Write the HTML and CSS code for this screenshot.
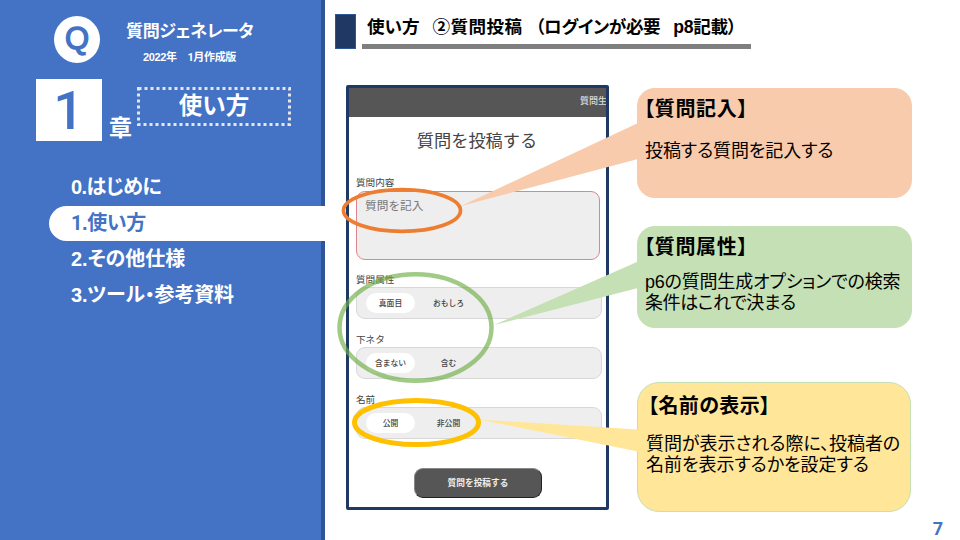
FILE: index.html
```html
<!DOCTYPE html>
<html lang="ja">
<head>
<meta charset="utf-8">
<title>質問ジェネレータ</title>
<link rel="stylesheet" href="styles.css">
</head>
<body>
<div class="slide">
  <aside class="sidebar">
    <div class="brand">
      <div class="logo">Q</div>
      <div class="brand-text">
        <div class="brand-name">質問ジェネレータ</div>
        <div class="brand-date">2022年　<span class="one">1</span>月作成版</div>
      </div>
    </div>
    <div class="chapter">
      <div class="chapter-num one">1</div>
      <div class="chapter-unit">章</div>
      <div class="chapter-title">
        <svg class="dots" width="154" height="39"><rect x="1.5" y="1.5" width="151" height="36"/></svg>
        <span>使い方</span>
      </div>
    </div>
    <nav class="menu">
      <div class="item i0">0.はじめに</div>
      <div class="item active"><span class="one">1</span>.使い方</div>
      <div class="item">2.その他仕様</div>
      <div class="item i3">3.ツール・参考資料</div>
    </nav>
  </aside>
  <main class="main">
    <header class="head">
      <div class="head-mark"></div>
      <h1 class="head-title"><span>使い方</span><span class="topic">②質問投稿</span><span class="cond">（ログインが必要</span><span class="ref">p8記載）</span></h1>
    </header>
    <div class="content">
      <section class="phone">
        <div class="bar">質問生</div>
        <h2 class="form-title">質問を投稿する</h2>
        <div class="label">質問内容</div>
        <div class="textarea">質問を記入</div>
        <div class="label l2">質問属性</div>
        <div class="group"><span class="opt on">真面目</span><span class="opt">おもしろ</span></div>
        <div class="label l3">下ネタ</div>
        <div class="group"><span class="opt on">含まない</span><span class="opt">含む</span></div>
        <div class="label l3">名前</div>
        <div class="group"><span class="opt on">公開</span><span class="opt">非公開</span></div>
        <div class="submit">質問を投稿する</div>
      </section>
      <section class="notes">
        <div class="note n1"><h3>【質問記入】</h3><p>投稿する質問を記入する</p></div>
        <div class="note n2"><h3>【質問属性】</h3><p><span class="row1">p6の質問生成オプションでの検索</span><br><span class="row2">条件はこれで決まる</span></p></div>
        <div class="note n3"><h3>【名前の表示】</h3><p><span class="row1">質問が表示される際に、投稿者の</span><br><span class="row2">名前を表示するかを設定する</span></p></div>
      </section>
    </div>
    <footer class="page">7</footer>
  </main>
  <svg class="overlay" width="960" height="540" viewBox="0 0 960 540">
    <polygon points="461,206 638,123 638,159" fill="#f8cbad"/>
    <polygon points="494,325 638,261.5 638,288" fill="#c5e0b4"/>
    <polygon points="479,419.5 638,429.5 638,451.5" fill="#ffe699"/>
    <ellipse cx="402" cy="210.5" rx="58.5" ry="20.8" stroke="#ed7d31" stroke-width="3.7"/>
    <ellipse cx="415.5" cy="327.5" rx="76" ry="53.2" stroke="#70ad47" stroke-opacity=".65" stroke-width="4.5"/>
    <ellipse cx="416.5" cy="422.5" rx="62" ry="22" stroke="#ffc000" stroke-width="5"/>
  </svg>
</div>
</body>
</html>
```
FILE: styles.css
```css
* { box-sizing: border-box; margin: 0; padding: 0; }
body { background: #fff; font-family: "Liberation Sans", "Noto Sans CJK JP", sans-serif; }
.slide { position: relative; width: 960px; height: 540px; display: grid; grid-template-columns: 325px 1fr; overflow: hidden; white-space: nowrap; }
.one { font-family: Roboto, sans-serif; }

.sidebar { background: #4472c4; border-right: 4px solid #2f5597; color: #fff; padding-top: 16px; font-weight: 700; }
.brand { display: flex; gap: 25px; padding-left: 54px; height: 63px; }
.logo { width: 46px; height: 47px; border-radius: 50%; background: #fff; color: #4472c4; font-size: 31px; line-height: 45px; text-align: center; font-weight: 400; -webkit-text-stroke: 1.4px #4472c4; }
.brand-name { font-size: 17px; line-height: 24px; margin-top: 4px; font-feature-settings: "palt"; letter-spacing: -0.35px; padding-left: 1px; }
.brand-date { font-size: 11px; line-height: 16px; margin-top: 5px; padding-left: 18px; letter-spacing: -0.35px; }
.chapter { display: flex; height: 62px; padding-left: 36px; }
.chapter-num { width: 66px; height: 62px; background: #fff; color: #4472c4; font-size: 54px; line-height: 64px; text-align: center; font-weight: 500; padding-right: 1px; }
.chapter-unit { width: 24px; margin: 35px 4px 0 7px; font-size: 23px; line-height: 28px; }
.chapter-title { position: relative; width: 154px; height: 39px; margin-top: 8px; font-size: 23.5px; line-height: 39px; text-align: center; }
.dots { position: absolute; left: 0; top: 0; }
.dots rect { fill: none; stroke: #e7e6e6; stroke-width: 3; stroke-dasharray: 3 3; }
.menu { margin-top: 27px; }
.item { height: 36px; line-height: 38px; padding-left: 71px; font-size: 20px; font-feature-settings: "palt"; }
.item.i0 { letter-spacing: -0.6px; }
.item.i3 { letter-spacing: -0.2px; }
.item.active { letter-spacing: -0.4px; height: 35px; line-height: 35px; margin: 2px -4px -1px 49px; padding-left: 22px; background: #fff; color: #4472c4; border-radius: 18px 0 0 18px; }

.main { display: flex; flex-direction: column; }
.head { display: flex; gap: 6px; padding: 14px 0 0 10px; height: 49px; }
.head-mark { width: 21px; height: 35px; background: #1f3864; border: 1px solid #2f5597; }
.head-title { width: 389px; height: 35px; border-bottom: 5px solid #7f7f7f; padding-left: 5px; font-size: 17.6px; line-height: 27px; display: flex; gap: 13px; font-feature-settings: "palt"; }
.head-title .topic { letter-spacing: 0.4px; }
.head-title .cond { letter-spacing: -0.4px; }
.head-title .ref { letter-spacing: -0.3px; }
.content { display: flex; gap: 28px; padding: 36px 0 0 21px; }
.phone { width: 263px; height: 425px; border: 3px solid #1f3864; border-radius: 2px; padding: 0 4px 0 7px; color: #444; overflow: hidden; font-family: "Noto Sans CJK JP", sans-serif; }
.bar { height: 29px; margin: 0 -5px 0 -7px; background: #565656; color: #ddd; font-size: 9px; font-weight: 500; line-height: 25px; text-align: right; }
.form-title { font-size: 17.2px; font-weight: 400; line-height: 26px; margin-top: 10px; text-align: center; padding-right: 4px; }
.label { font-size: 9.6px; line-height: 14px; margin-top: 22px; }
.textarea { width: 244px; height: 69px; margin-top: 2px; border: 1px solid #e0858c; border-radius: 9px; background: #eee; color: #777; font-size: 11.7px; line-height: 16px; padding: 5px 8px; }
.label.l2 { margin-top: 12px; }
.group { width: 246px; height: 32px; margin-top: 1px; border: 1px solid #d8d8d8; border-radius: 9px; background: #eee; padding: 5px 9px; display: flex; gap: 9px; font-size: 7.8px; }
.opt { width: 49px; height: 20px; line-height: 20px; text-align: center; border-radius: 10px; font-weight: 500; }
.opt.on { background: #fff; }
.label.l3 { margin-top: 13px; }
.submit { width: 128px; height: 30px; margin: 29px 0 0 58px; border-radius: 9px; background: #565656; border: 1px solid #888; border-right-color: #222; border-bottom-color: #222; color: #eee; font-size: 8.7px; font-weight: 700; line-height: 28px; text-align: center; }

.notes { width: 275px; color: #000; padding-top: 3px; }
.note { border-radius: 18px; padding-left: 8px; font-feature-settings: "palt"; }
.note h3 { font-size: 20px; line-height: 26px; letter-spacing: 0.7px; margin-left: -1px; }
.note p { font-size: 18px; line-height: 21px; }
.n1 { height: 110px; background: #f8cbad; padding-top: 8px; }
.n1 p { margin-top: 19px; letter-spacing: -0.1px; }
.n2 { height: 102px; margin-top: 28px; background: #c5e0b4; padding-top: 8px; }
.n2 p { margin-top: 12px; letter-spacing: -0.2px; }
.n2 .row2 { letter-spacing: -0.4px; }
.n3 { width: 274px; height: 130px; margin-top: 54px; background: #ffe699; border: 1px solid #c5e0b4; border-radius: 22px; padding-top: 10px; }
.n3 h3 { margin-left: 2px; letter-spacing: 0.4px; }
.n3 p { margin-top: 15px; letter-spacing: -0.05px; }
.page { font: 700 18px/24px Roboto, sans-serif; color: #4472c4; text-align: right; padding: 5px 17px 0 0; }
.overlay { position: absolute; left: 0; top: 0; fill: none; }
```
